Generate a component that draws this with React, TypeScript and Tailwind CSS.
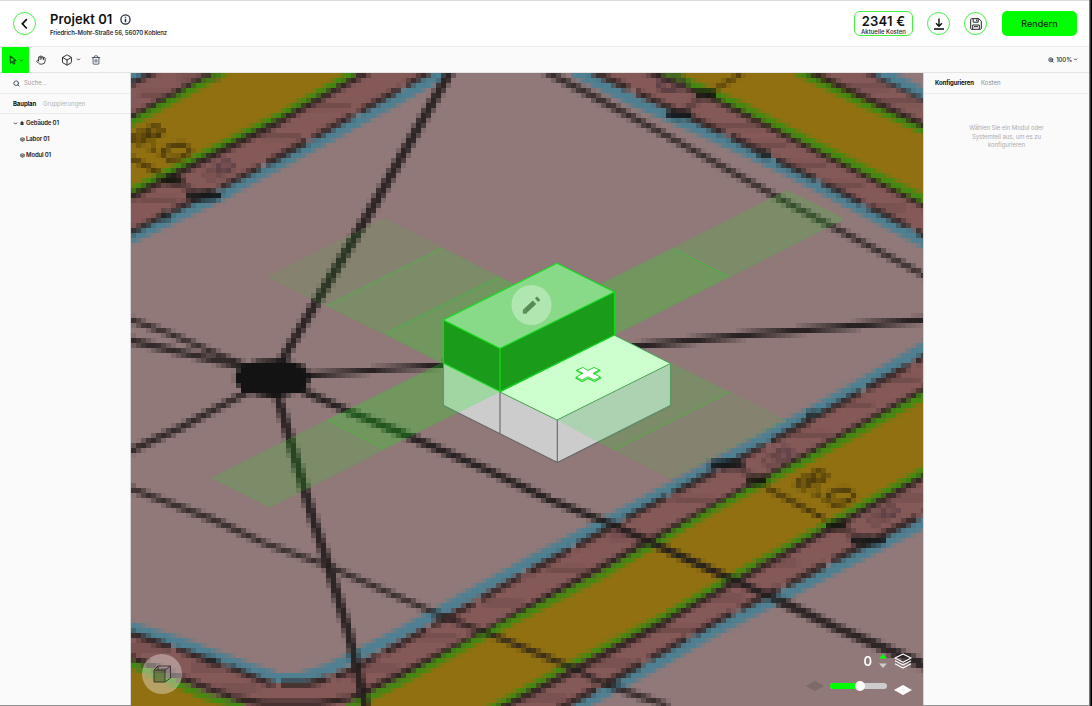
import { useLayoutEffect, useRef } from "react";
import type { ReactNode } from "react";
import { Box, ChevronDown, Hand, Search, Trash2, ZoomIn } from "lucide-react";

type Pt = [number, number];

const CELL = 5;
const COLS = 159;
const ROWS = 127;

const GROUND = "#907978";
const ROSE = "#845958";
const YELLOW = "#907011";
const BLUE = "#4f8092";
const GREEN = "#438a12";
const EDGE = "#2b201f";
const ROAD = "#231d1d";

const streaks: Pt[] = [
  [331, 106], [281, 136], [158, 200], [200, 78], [160, 95], [740, 126], [767, 145], [807, 165], [843, 185],
  [885, 208], [870, 87], [900, 101], [693, 500], [777, 563], [723, 598], [677, 630], [907, 498], [567, 570],
  [503, 603], [437, 637], [613, 663], [547, 698], [211, 668], [238, 688], [378, 668], [148, 648], [853, 405],
  [810, 435], [630, 537], [900, 380],
];

const roads: { pts: Pt[]; w: number; a: number }[] = [
  { pts: [[275, 375], [285, 355], [375, 203], [451, 70]], w: 9, a: 0.9 },
  { pts: [[128, 319], [168, 333], [250, 368]], w: 6, a: 0.8 },
  { pts: [[128, 340], [181, 352], [250, 368]], w: 6.5, a: 0.85 },
  { pts: [[128, 452], [181, 427], [255, 388]], w: 7, a: 0.85 },
  { pts: [[128, 488], [214, 520], [264, 543], [324, 564], [398, 597], [447, 618], [497, 637], [573, 668], [607, 685], [668, 706]], w: 5.8, a: 0.8 },
  { pts: [[276, 385], [279, 400], [296, 460], [314, 522], [328, 565], [348, 630], [366, 708]], w: 9, a: 0.9 },
  { pts: [[295, 387], [348, 411], [401, 433], [487, 470], [550, 500], [613, 525], [667, 550], [733, 580], [777, 600]], w: 7.2, a: 0.95 },
  { pts: [[777, 600], [837, 628], [926, 666]], w: 9.5, a: 0.9 },
  { pts: [[300, 376], [401, 368], [443, 365], [637, 346], [747, 335], [807, 330], [907, 321], [928, 320]], w: 6, a: 0.95 },
  { pts: [[545, 71], [593, 96], [680, 143], [790, 204], [928, 277]], w: 6, a: 0.8 },
];

function paintMap(ctx: CanvasRenderingContext2D) {
  ctx.setTransform(1 / CELL, 0, 0, 1 / CELL, -131 / CELL, -73 / CELL);
  ctx.lineJoin = "round";

  const area = (pts: Pt[], color: string) => {
    ctx.fillStyle = color;
    ctx.beginPath();
    pts.forEach(([x, y], i) => (i ? ctx.lineTo(x, y) : ctx.moveTo(x, y)));
    ctx.closePath();
    ctx.fill();
  };
  const line = (pts: Pt[], color: string, w: number, alpha = 1, dash: number[] = []) => {
    ctx.globalAlpha = alpha;
    ctx.strokeStyle = color;
    ctx.lineWidth = w;
    ctx.setLineDash(dash);
    ctx.beginPath();
    pts.forEach(([x, y], i) => (i ? ctx.lineTo(x, y) : ctx.moveTo(x, y)));
    ctx.stroke();
    ctx.setLineDash([]);
    ctx.globalAlpha = 1;
  };
  const blob = (x: number, y: number, rx: number, ry: number, color: string, alpha = 1) => {
    ctx.globalAlpha = alpha;
    ctx.fillStyle = color;
    ctx.beginPath();
    ctx.ellipse(x, y, rx, ry, 0, 0, Math.PI * 2);
    ctx.fill();
    ctx.globalAlpha = 1;
  };
  const ring = (x: number, y: number, rx: number, ry: number, color: string, w: number, alpha: number) => {
    ctx.globalAlpha = alpha;
    ctx.strokeStyle = color;
    ctx.lineWidth = w;
    ctx.beginPath();
    ctx.ellipse(x, y, rx, ry, -0.2, 0, Math.PI * 2);
    ctx.stroke();
    ctx.globalAlpha = 1;
  };

  area([[120, 60], [940, 60], [940, 720], [120, 720]], GROUND);

  // north-west street
  const nwOuter: Pt[] = [[125, 87], [158, 70]];
  const nwIn: Pt[] = [[125, 235], [201, 197], [261, 167], [348, 118], [432, 71]];
  area([[125, 85], [155, 70], [432, 70], [348, 118], [261, 166], [125, 234]], ROSE);
  area([[125, 124], [230, 68], [365, 68], [125, 196]], YELLOW);
  line([[125, 81], [150, 68]], BLUE, 10);
  line(nwOuter, EDGE, 5.5, 0.85);
  line([[125, 241], [231, 190], [331, 136], [444, 73]], BLUE, 11);
  line(nwIn, EDGE, 6, 0.85, [46, 7]);
  line([[125, 121], [213, 73]], EDGE, 6, 0.9);
  line([[125, 126], [228, 70]], GREEN, 7);
  line([[125, 194], [281, 115], [355, 72]], GREEN, 7);
  line([[125, 200], [281, 121], [370, 71]], EDGE, 6, 0.9);

  // north-east street
  area([[588, 68], [680, 114], [928, 238], [928, 95], [880, 68]], ROSE);
  area([[657, 68], [808, 68], [928, 130], [928, 205]], YELLOW);
  line([[573, 71], [633, 100], [710, 134], [793, 173], [928, 244]], BLUE, 11);
  line([[589, 70], [640, 94], [720, 131], [793, 168], [928, 237]], EDGE, 6, 0.85, [44, 8]);
  line([[645, 70], [710, 96], [793, 139], [928, 207]], EDGE, 6, 0.9);
  line([[657, 68], [740, 105], [807, 140], [928, 201]], GREEN, 7);
  line([[796, 71], [860, 102], [928, 132]], GREEN, 7);
  line([[806, 70], [928, 127]], EDGE, 6, 0.9);
  line([[878, 71], [928, 97]], BLUE, 12);
  line([[864, 71], [928, 102]], EDGE, 5, 0.6);

  // southern street
  area([
    [125, 630], [168, 644], [241, 670], [271, 682], [308, 682], [344, 672], [400, 642], [513, 580], [650, 505],
    [767, 444], [928, 354], [928, 513], [847, 553], [713, 623], [643, 663], [555, 712], [125, 712],
  ], ROSE);
  area([[125, 664], [208, 697], [246, 712], [125, 712]], YELLOW);
  area([[345, 712], [400, 682], [500, 627], [650, 548], [717, 507], [928, 393], [928, 470], [820, 527], [660, 618], [490, 712]], YELLOW);
  line([[125, 625], [181, 643], [248, 668], [275, 677], [300, 678], [331, 668], [401, 633], [533, 560], [650, 499], [767, 437], [853, 389], [928, 345]], BLUE, 11);
  line([[125, 632], [168, 646], [211, 661], [241, 672], [271, 684], [308, 684], [344, 674], [400, 644], [513, 581], [655, 503], [750, 453], [928, 355]], EDGE, 6, 0.85, [48, 7]);
  line([[125, 655], [181, 678], [231, 697], [264, 704], [318, 704], [351, 698], [400, 675], [480, 634], [547, 597], [643, 545], [707, 509], [810, 453], [928, 388]], EDGE, 6, 0.9);
  line([[125, 662], [208, 697], [244, 708]], GREEN, 7);
  line([[348, 708], [400, 682], [500, 627], [600, 576], [717, 508], [810, 459], [928, 394]], GREEN, 7);
  line([[487, 711], [573, 663], [667, 615], [727, 580], [820, 528], [928, 469]], GREEN, 7);
  line([[497, 711], [573, 671], [667, 621], [727, 587], [820, 534], [928, 475]], EDGE, 6, 0.9);
  line([[575, 709], [667, 658], [710, 633], [793, 591], [847, 562], [928, 521]], BLUE, 11);
  line([[558, 710], [643, 663], [713, 623], [813, 571], [928, 512]], EDGE, 6, 0.85, [44, 8]);

  streaks.forEach(([x, y]) => line([[x - 20, y], [x + 20, y]], "#4a3434", 4, 0.42));

  roads.forEach((r) => line(r.pts, ROAD, r.w, r.a));
  ctx.fillStyle = "#131313";
  ctx.beginPath();
  ctx.ellipse(272.5, 378.5, 38, 19.5, 0, 0, Math.PI * 2);
  ctx.rect(241, 364, 63, 29);
  ctx.fill();

  // dimension marks
  const mark = (dx: number, dy: number) => {
    const ink = "#332608";
    ring(804 + dx, 483 + dy, 7, 5, ink, 4.5, 0.75);
    ring(818 + dx, 477 + dy, 8, 5, ink, 4.5, 0.85);
    blob(817 + dx, 494 + dy, 4, 3, ink, 0.6);
    ring(840 + dx, 497 + dy, 14, 7, ink, 4.5, 0.8);
    line([[765 + dx, 487 + dy], [825 + dx, 519 + dy]], ink, 5, 0.75);
    blob(757 + dx, 481 + dy, 11, 5, "#15180f", 0.95);
    blob(727 + dx, 464 + dy, 18, 5, "#15181a", 0.95);
    line([[735 + dx, 464 + dy], [757 + dx, 480 + dy]], "#302423", 6, 0.5);
    blob(837 + dx, 525 + dy, 11, 5, "#15180f", 0.95);
    blob(868 + dx, 540 + dy, 18, 5, "#15181a", 0.95);
    line([[840 + dx, 525 + dy], [862 + dx, 541 + dy]], "#302423", 7, 0.5);
    ring(770 + dx, 461 + dy, 7, 5, "#4a2f34", 4, 0.4);
    ring(784 + dx, 454 + dy, 8, 5, "#44303a", 5, 0.6);
    ring(876 + dx, 519 + dy, 7, 5, "#4a2f34", 4, 0.4);
    ring(889 + dx, 512 + dy, 8, 5, "#44303a", 5, 0.6);
  };
  mark(0, 0);
  mark(-664, -345);
  blob(706, 94, 11, 5, "#15180f", 0.95);
  blob(679, 114, 14, 5, "#15181a", 0.95);
  line([[679, 114], [706, 94]], "#302423", 6, 0.45);
  line([[743, 73], [712, 91]], "#3a2b0c", 5, 0.65);
  ring(672, 84, 13, 6, "#44303a", 6, 0.6);
  blob(813, 415, 8, 4, "#1e2527", 0.8);
  blob(166, 215, 6, 5, "#1e2527", 0.8);
  blob(212, 661, 6, 4, "#1e2527", 0.8);
  blob(765, 155, 7, 4, "#1e2527", 0.8);
}

function SiteMap() {
  const ref = useRef<HTMLCanvasElement>(null);
  useLayoutEffect(() => {
    const ctx = ref.current?.getContext("2d");
    if (ctx) paintMap(ctx);
  }, []);
  return (
    <canvas ref={ref} width={COLS} height={ROWS} className="block h-[635px] w-[795px] max-w-none [image-rendering:pixelated]" />
  );
}

function Building() {
  return (
    <svg viewBox="131 73 793 633" className="absolute inset-0 h-[633px] w-[793px] max-w-none" strokeLinejoin="round">
      <g fill="#12f510">
        <g fillOpacity=".08">
          <path d="M269 277 384 219 442 248 327 306z" />
          <path d="M729 392 786 421 671 478 614 450z" />
        </g>
        <g fillOpacity=".155">
          <path d="M327 306 442 248 499 277 385 334z" />
          <path d="M673 248.500 787 190.500 844 219 729 277z" />
          <path d="M327 420 384 449 270 507 212 478z" />
          <path d="M671 363 729 392 614 450 557 420z" />
        </g>
        <g fillOpacity=".24">
          <path d="M385 334 499 277 557 306 442 363z" />
          <path d="M673 248.500 729 277 614 335 557 306z" />
          <path d="M442 363 499 392 384 449 327 420z" />
        </g>
      </g>
      <g fill="none" stroke="#3fbf3a" strokeWidth="1">
        <path d="M327 306 442 248M385 334 499 277M673 248.500 729 277M327 420 384 449M729 392 614 450" strokeOpacity=".75" />
        <path d="M269 277 384 219 557 306M269 277 442 363M557 306 787 190.500 844 219 614 335M442 363 212 478 270 507 499 392M671 363 786 421 671 478 557 420" strokeOpacity=".22" />
      </g>
      <path d="M443 363 500 392V434L443 405.500z" fill="#ccc" />
      <path d="M443 363 500 392 458 413 443 405.500z" fill="#a1d6a3" />
      <path d="M500 392 557 420V462.500L500 434z" fill="#ccc" />
      <path d="M557 420 670.500 363.500V405.500L557 462.500z" fill="#ccc" />
      <path d="M557 420 670.500 363.500V405.500L598 442z" fill="#add2b1" />
      <path d="M443.500 363V405.500L557.500 462.500 670.500 405.500V363.500M500 392V434M557.300 420V462.500" fill="none" stroke="#666" strokeWidth="1.100" />
      <path d="M443.500 363V405.500L458 413M670.500 363.500V405.500L598 442" fill="none" stroke="#5c9c62" strokeWidth="1" />
      <path d="M614 335 670.500 363.500 557 420 500 392z" fill="#ccffcd" stroke="#48a455" strokeWidth="1" />
      <path d="M443 320 557 263 614.500 292 500 348.500z" fill="#88da88" />
      <path d="M443 320 500 348.500V391.500L443 363z" fill="#1a9c1a" />
      <path d="M500 348.500 614.500 292V335L500 391.500z" fill="#1a9c1a" />
      <path d="M443.300 320 557 263.300 614.500 292V335L500 391.500 443.300 363zM443.300 320 500 348.500 614.500 292M500 348.500V391.500" fill="none" stroke="#12dd1c" strokeWidth="1.200" />
      <circle cx="531.500" cy="305" r="20" fill="#fff" fillOpacity=".34" />
      <path d="M525.300 311 534.500 302.300" stroke="#568b58" strokeWidth="5" strokeLinecap="butt" />
      <path d="M523.400 309.700 526.800 313 523.300 313.200z" fill="#568b58" stroke="#568b58" />
      <path d="M536.600 300.200 538.600 298.300" stroke="#568b58" strokeWidth="4.800" />
      <g strokeLinejoin="round">
        <path d="M576.500 370.500 582.500 368 588 371 594 368 600 370.500 594 374 600.800 378 594.500 381.500 588.300 378.500 582 381.500 575.800 378 582.500 374z" fill="#cfffd0" stroke="#20d42a" strokeWidth="1.200" />
        <path d="M577 370 583 367.500 588 370.500 594 367.500 599.500 369.900 593 373.300 600.300 377 594 380 588 376.800 582 380 576.200 377 583 373.300z" fill="#fff" stroke="#20d42a" strokeWidth=".9" />
      </g>
    </svg>
  );
}

function CircleButton({ children }: { children: ReactNode }) {
  return (
    <button className="flex h-[23px] w-[23px] shrink-0 items-center justify-center rounded-full border border-[#3ff03f] bg-white">
      {children}
    </button>
  );
}

function Header() {
  return (
    <header className="flex h-[47px] items-start border-t border-b border-t-[#e0d9da] border-b-[#ececec] bg-white pr-[12px] pl-[13px]">
      <div className="pt-[11px]">
        <CircleButton>
          <svg viewBox="0 0 12 12" className="h-3 w-3" fill="none" stroke="#111" strokeWidth="1.700">
            <path d="M7.800 1.200 3.300 5.800 7.800 10.500" />
          </svg>
        </CircleButton>
      </div>
      <div className="ml-[14px] pt-[9px]">
        <div className="flex h-[18px] items-center">
          <h1 className="w-[64px] text-[13px] leading-[18px] font-semibold tracking-[0.080px] whitespace-nowrap text-[#111]">Projekt 01</h1>
          <svg viewBox="0 0 12 12" className="ml-[6px] h-[11px] w-[11px]" fill="none" stroke="#222b3a">
            <circle cx="6" cy="6" r="5" strokeWidth="1.400" />
            <path d="M6 5.300V9M6 2.900V4.200" strokeWidth="1.600" />
          </svg>
        </div>
        <p className="text-[6px] leading-[10px] font-semibold tracking-[-0.120px] whitespace-nowrap text-[#2b3240]">Friedrich-Mohr-Straße 56, 56070 Koblenz</p>
      </div>
      <div className="ml-auto flex pt-[10px]">
        <div className="flex h-[25px] w-[59px] flex-col items-center rounded-[6px] border border-[#3ff03f]">
          <span className="text-[13px] leading-[19px] font-semibold tracking-[0.250px] text-[#111]">2341 €</span>
          <span className="-mt-[2px] text-[6px] leading-[6px] font-medium whitespace-nowrap text-[#222]">Aktuelle Kosten</span>
        </div>
        <div className="mt-px ml-[14px]">
          <CircleButton>
            <svg viewBox="0 0 12 12" className="h-3 w-3" fill="none" stroke="#111">
              <path d="M6 .5V8M3 5.300 6 8.200 9 5.300" strokeWidth="1.400" />
              <path d="M1 11H11" strokeWidth="1.600" />
            </svg>
          </CircleButton>
        </div>
        <div className="mt-px ml-[14px]">
          <CircleButton>
            <svg viewBox="0 0 12 12" className="h-3 w-3" fill="none" stroke="#222" strokeWidth="1">
              <path d="M1.500.7H8.800L11.300 3.200V10.500Q11.300 11.300 10.500 11.300H1.500Q.7 11.300.7 10.500V1.500Q.7.700 1.500.7z" />
              <path d="M3.200.9V4.200H8.200V.9M2.700 11V7H9.300V11M6.700 1.500V3.200M4 8.700H8" />
            </svg>
          </CircleButton>
        </div>
        <button className="ml-[15px] h-[25px] w-[75px] rounded-[5px] bg-[#00ff00] text-[9px] font-medium text-[#0b2a0b]">Rendern</button>
      </div>
    </header>
  );
}

function Toolbar() {
  return (
    <div className="flex h-[26px] items-center border-b border-[#e4e4e4] bg-[#fafafa] pr-[11px] pl-[2px]">
      <button className="-mb-px flex h-[26px] w-[27px] items-center justify-center gap-[2px] bg-[#00ff00] pl-[2px]">
        <svg viewBox="0 0 10 12" className="h-[10px] w-[8px]" fill="none" stroke="#124a12" strokeWidth="1.300" strokeLinejoin="round">
          <path d="M1.500 1 8.700 6.800 5.600 7.100 7.300 10.500 5.700 11.200 4.100 7.900 1.700 9.900z" />
        </svg>
        <ChevronDown size={5} strokeWidth={4} className="text-[#124a12]" />
      </button>
      <Hand size={10} strokeWidth={2} className="ml-[7px] text-[#222]" />
      <Box size={12} strokeWidth={1.8} className="ml-[15px] text-[#1c1c1c]" />
      <ChevronDown size={5} strokeWidth={4} className="ml-[3px] text-[#222]" />
      <Trash2 size={10} strokeWidth={2} className="ml-[10px] text-[#374151]" />
      <div className="ml-auto flex items-center">
        <ZoomIn size={6} strokeWidth={3.5} className="text-[#374151]" />
        <span className="ml-[2px] text-[6px] leading-[8px] font-medium tracking-[-0.100px] text-[#111]">100%</span>
        <ChevronDown size={5} strokeWidth={4} className="ml-px text-[#222]" />
      </div>
    </div>
  );
}

function TreeItem({ label }: { label: string }) {
  return (
    <li className="flex h-[16px] items-center pl-[20px]">
      <svg viewBox="0 0 8 8" className="h-[5px] w-[5px]" fill="#9a9a9a" stroke="#444" strokeWidth="1">
        <path d="M1 2.300 4 1 7 2.300V5.500L4 7 1 5.500zM1 2.300 4 3.700 7 2.300" />
      </svg>
      <span className="ml-px text-[6px] leading-[8px] font-semibold tracking-[-0.150px] text-[#222]">{label}</span>
    </li>
  );
}

function LeftPanel() {
  return (
    <aside className="w-[131px] shrink-0 border-r border-[#d6d6d6] bg-[#fafafa]">
      <div className="flex h-[21px] items-center border-b border-[#ececec] pl-[13px]">
        <Search size={7} strokeWidth={3} className="text-[#374151]" />
        <span className="ml-[4px] text-[6px] leading-[8px] text-[#9b9b9b]">Suche...</span>
      </div>
      <div className="flex h-[20px] items-center border-b border-[#ececec] pl-[13px] text-[6px] leading-[8px]">
        <span className="w-[30px] font-bold tracking-[-0.100px] text-[#111]">Bauplan</span>
        <span className="tracking-[-0.030px] text-[#b4b4b4]">Gruppierungen</span>
      </div>
      <ul>
        <li className="flex h-[17px] items-center pt-px pl-[13px]">
          <ChevronDown size={5} strokeWidth={4} className="text-[#222]" />
          <svg viewBox="0 0 8 8" className="ml-[2px] h-[4px] w-[4px]" fill="#333">
            <path d="M4 0 8 4H7V8H1V4H0z" />
          </svg>
          <span className="ml-[2px] text-[6px] leading-[8px] font-semibold tracking-[-0.150px] text-[#222]">Gebäude 01</span>
        </li>
        <TreeItem label="Labor 01" />
        <TreeItem label="Modul 01" />
      </ul>
    </aside>
  );
}

function RightPanel() {
  return (
    <aside className="min-w-0 flex-1 border-l border-[#d6d6d6] bg-[#fafafa]">
      <div className="flex h-[21px] items-center border-b border-[#ececec] pl-[11px] text-[6px] leading-[8px]">
        <span className="w-[46px] font-bold tracking-[-0.120px] text-[#111]">Konfigurieren</span>
        <span className="text-[#8c8c8c]">Kosten</span>
      </div>
      <p className="pt-[30px] text-center text-[6px] leading-[8.500px] tracking-[-0.050px] text-[#adadad]">
        Wählen Sie ein Modul oder
        <br />
        Systemteil aus, um es zu
        <br />
        konfigurieren
      </p>
    </aside>
  );
}

function MapControls() {
  return (
    <div className="absolute right-[11px] bottom-[10px] flex w-[110px] flex-col items-end">
      <div className="flex h-[18px] items-center">
        <span className="text-[13px] leading-[18px] font-semibold text-white">0</span>
        <svg viewBox="0 0 8 14" className="ml-[7px] h-[14px] w-[8px]">
          <path d="M4 0 8 4.500H0z" fill="#00ff00" />
          <path d="M0 9.500H8L4 14z" fill="#ccc" />
        </svg>
        <svg viewBox="0 0 18 16" className="ml-[7px] h-[16px] w-[18px]" fill="none" stroke="#fff" strokeWidth="1.200" strokeLinejoin="round">
          <path d="M9 1 17 5 9 9.300 1 5z" />
          <path d="M1 7.700 9 12 17 7.700M1 10.700 9 15 17 10.700" />
        </svg>
      </div>
      <div className="mt-[6px] flex h-[20px] items-center">
        <svg viewBox="0 0 18 10" className="h-[10px] w-[18px]" fill="#7d6a69">
          <path d="M0 5 9 0 18 5 9 10z" />
        </svg>
        <div className="ml-[6px] flex h-[6px] w-[57px] items-center rounded-full bg-[#ccc]">
          <div className="h-[6px] w-[26px] rounded-l-full bg-[#00ff00]" />
          <div className="-ml-px h-[10px] w-[10px] rounded-full bg-white" />
        </div>
        <svg viewBox="0 0 18 10" className="mt-[7px] ml-[7px] h-[10px] w-[18px]" fill="#fff">
          <path d="M0 5 9 0 18 5 9 10z" />
          <path d="M9 2V8M5 5H13" stroke="#ddd" strokeWidth=".5" />
        </svg>
      </div>
    </div>
  );
}

export default function App() {
  return (
    <div className="flex h-[706px] w-[1092px] overflow-hidden bg-[#fafafa] font-['Inter',sans-serif]">
      <div className="flex min-w-0 flex-1 flex-col">
        <Header />
        <Toolbar />
        <div className="flex min-h-0 flex-1">
          <LeftPanel />
          <main className="relative w-[792px] shrink-0 overflow-hidden">
            <SiteMap />
            <Building />
            <div className="absolute bottom-[12px] left-[11px] flex h-[40px] w-[40px] items-center justify-center rounded-full bg-white/35">
              <svg viewBox="0 0 20 20" className="h-[20px] w-[20px]" fill="none" stroke="#33302b" strokeWidth=".9">
                <path d="M2 6H13V18H2z" fill="#4d5a20" fillOpacity=".55" />
                <path d="M2 6 6 2H18.500L13 6M18.500 2V14L13 18M6 2V6" />
              </svg>
            </div>
            <MapControls />
          </main>
          <RightPanel />
        </div>
        <div className="-mt-px h-px w-full shrink-0 bg-[#8f8f8f]" />
      </div>
      <div className="w-[3px] shrink-0 border-r border-l border-r-black border-l-[#777] bg-[#333]" />
    </div>
  );
}
